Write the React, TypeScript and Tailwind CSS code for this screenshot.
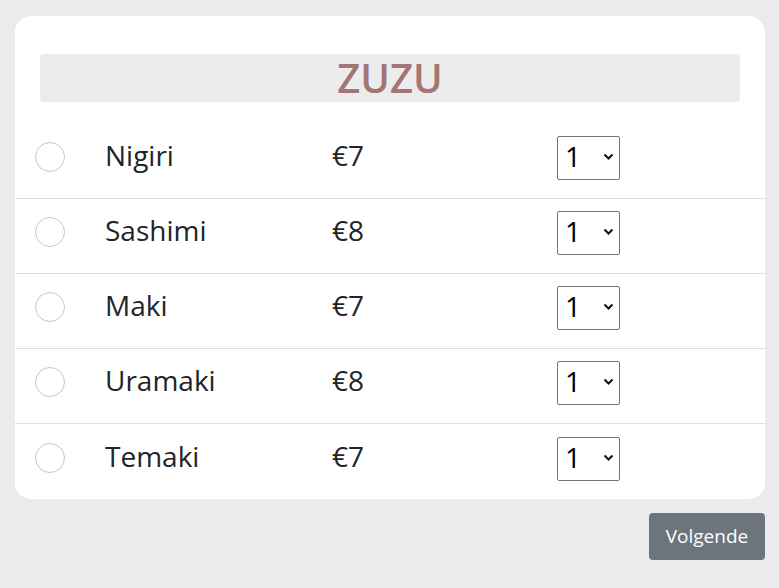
const items = [
  { name: 'Nigiri', price: '€7' },
  { name: 'Sashimi', price: '€8' },
  { name: 'Maki', price: '€7' },
  { name: 'Uramaki', price: '€8' },
  { name: 'Temaki', price: '€7' },
];

export default function App() {
  return (
    <div
      className="min-h-screen w-full bg-[#ebebeb] pt-4 pl-[15px] pr-[14px]"
      style={{ fontFamily: '"Open Sans", "Noto Sans", sans-serif' }}
    >
      {/* Card */}
      <div className="w-[750px] bg-white rounded-2xl overflow-hidden">
        <div className="px-[25px] pt-[38px] pb-[22px]">
          <div className="h-12 bg-[#ececec] rounded flex items-center justify-center">
            <h1 className="text-[40px] leading-none text-[#a37577] font-semibold">ZUZU</h1>
          </div>
        </div>

        <div>
          {items.map((item, i) => (
            <div
              key={item.name}
              className={`h-[75px] pb-2 flex items-center text-[28px] text-[#212529] ${i < items.length - 1 ? 'border-b border-[#dedede]' : ''}`}
            >
              <div className="w-[90px] pl-5 flex items-center">
                <span className="w-[30px] h-[30px] rounded-full border border-[#c6c6c6] bg-white" />
              </div>
              <div className="w-[227px] -mt-1">{item.name}</div>
              <div className="w-[225px] -mt-1">{item.price}</div>
              <div className="relative w-[63px] h-[44px]">
                <select className="appearance-none w-full h-full border border-[#767676] rounded-[2px] bg-white pl-[7px] pb-1 text-[28px] leading-none text-black outline-none">
                  <option>1</option>
                  <option>2</option>
                  <option>3</option>
                </select>
                <svg
                  className="absolute right-[6px] top-[18px] pointer-events-none"
                  width="11"
                  height="7"
                  viewBox="0 0 11 7"
                >
                  <polyline points="1.5,1.5 5.5,5.5 9.5,1.5" fill="none" stroke="#111" strokeWidth="2" />
                </svg>
              </div>
            </div>
          ))}
        </div>
      </div>

      <div className="w-[750px] flex justify-end mt-[14px]">
        <button className="w-[116px] h-[47px] bg-[#6c757d] text-white text-[19px] rounded">
          Volgende
        </button>
      </div>
    </div>
  );
}
